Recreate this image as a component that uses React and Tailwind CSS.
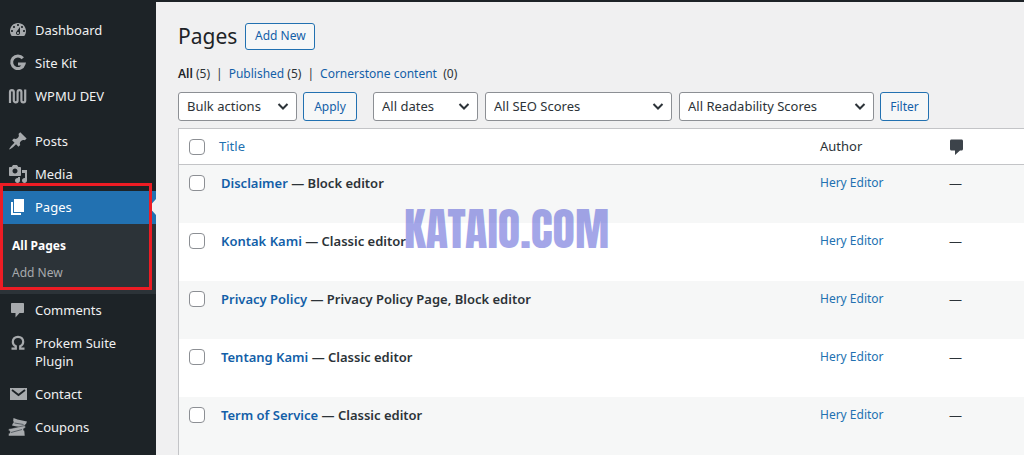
import React from 'react';

const UI_FONT = "font-['Noto_Sans','Open_Sans',sans-serif]";

// 20x20 grid icons used by the menu
const ICONS = {
  dashboard: (
    <path d="M3.76 16h12.48c1.1-1.37 1.76-3.11 1.76-5 0-4.42-3.58-8-8-8s-8 3.58-8 8c0 1.89.66 3.63 1.76 5zM10 4c.55 0 1 .45 1 1s-.45 1-1 1-1-.45-1-1 .45-1 1-1zM6 6c.55 0 1 .45 1 1s-.45 1-1 1-1-.45-1-1 .45-1 1-1zm8 0c.55 0 1 .45 1 1s-.45 1-1 1-1-.45-1-1 .45-1 1-1zm-5.37 5.55L12 7v6c0 1.1-.9 2-2 2s-2-.9-2-2c0-.57.24-1.08.63-1.45zM4 10c.55 0 1 .45 1 1s-.45 1-1 1-1-.45-1-1 .45-1 1-1zm12 0c.55 0 1 .45 1 1s-.45 1-1 1-1-.45-1-1 .45-1 1-1zm-5 3c0-.55-.45-1-1-1s-1 .45-1 1 .45 1 1 1 1-.45 1-1z" />
  ),
  siteKit: (
    <path d="M14.8 5.2A6.300 6.300 0 1 0 16 11H10" fill="none" stroke="currentColor" strokeWidth="3" />
  ),
  wpmu: (
    <path
      d="M2 17V6a1.900 1.900 0 0 1 3.800 0v8.500a1.900 1.900 0 0 0 3.800 0V6a1.900 1.900 0 0 1 3.800 0v8.500a1.900 1.900 0 0 0 3.800 0V3.500"
      fill="none"
      stroke="currentColor"
      strokeWidth="2.200"
    />
  ),
  posts: (
    <path d="M10.44 3.02l1.82-1.82 6.36 6.35-1.83 1.82c-1.05-.68-2.48-.57-3.41.36l-.75.75c-.92.93-1.04 2.35-.35 3.41l-1.83 1.82-2.41-2.41-2.8 2.79c-.42.42-3.38 2.71-3.8 2.29s1.86-3.39 2.28-3.81l2.79-2.79L4.1 9.36l1.83-1.82c1.05.69 2.48.57 3.4-.36l.75-.75c.93-.92 1.05-2.35.36-3.41z" />
  ),
  media: (
    <path d="M13 11V4c0-.55-.45-1-1-1h-1.67L9 1H5L3.67 3H2c-.55 0-1 .45-1 1v7c0 .55.45 1 1 1h10c.55 0 1-.45 1-1zM7 4.5c1.38 0 2.5 1.12 2.5 2.5S8.38 9.5 7 9.5 4.5 8.38 4.5 7 5.62 4.5 7 4.5zM14 6h5v10.5c0 1.38-1.12 2.5-2.5 2.5S14 17.88 14 16.5s1.12-2.5 2.5-2.5c.17 0 .34.02.5.05V9h-3V6zm-4 8.05V13h2v3.5c0 1.38-1.12 2.5-2.5 2.5S7 17.88 7 16.5 8.12 14 9.5 14c.17 0 .34.02.5.05z" />
  ),
  pages: <path d="M6 15V2h10v13H6zm-1 1h8v2H3V5h2v11z" />,
  comments: (
    <path d="M4 3h11c.6 0 1 .4 1 1v8c0 .6-.4 1-1 1h-3.500l-4 4.500V13H4c-.6 0-1-.4-1-1V4c0-.6.4-1 1-1z" />
  ),
  contact: (
    <>
      <path d="M2 4h17v12H2z" />
      <path d="M4 6l6.500 5L17 6" fill="none" stroke="#1d2327" strokeWidth="1.800" />
    </>
  ),
  coupons: (
    <>
      <path d="M5.500 1l4 1.500L19 4.500l-1 2.500a1.500 1.500 0 0 0-.8 2.200l-.7 2L4 8.500l.8-2A1.500 1.500 0 0 0 5.200 4z" />
      <path
        d="M.5 12L17 8.500l.6 2.500a1.500 1.500 0 0 0-1 3l.4 5H.5v-2.500a1.500 1.500 0 0 0 0-3z"
        stroke="#1d2327"
        strokeWidth="0.500"
      />
      <path d="M3 15.500L14 12.500M6.500 6l9 1.500" fill="none" stroke="#50575e" strokeWidth="0.900" />
    </>
  ),
  omega: (
    <path
      d="M3.500 15.700h4.300v-2.400C5.700 12.300 4.800 10.600 4.800 8.700 4.800 5.700 7 3.800 10 3.800s5.200 1.900 5.200 4.900c0 1.900-.9 3.600-3 4.600v2.400h4.300"
      fill="none"
      stroke="currentColor"
      strokeWidth="2.200"
    />
  ),
};

const MenuIcon = ({ name }) => (
  <svg className="w-5 h-5 shrink-0" viewBox="0 0 20 20" fill="currentColor" aria-hidden="true">
    {ICONS[name]}
  </svg>
);

const MenuItem = ({ icon, label, current }) => (
  <a
    href="#"
    className={
      current
        ? 'relative flex gap-[7px] pl-2 pr-4 pt-[7px] pb-2 leading-[18px] bg-[#2271b1] text-white'
        : 'flex gap-[7px] pl-2 pr-4 pt-[7px] pb-2 leading-[18px] text-[#f0f0f1] hover:text-[#72aee6]'
    }
  >
    <span className={current ? 'flex h-[18px] items-center text-white' : 'flex h-[18px] items-center text-[#a7aaad]'}>
      <MenuIcon name={icon} />
    </span>
    <span>{label}</span>
    {current && (
      <svg className="absolute right-0 top-2 w-[5px] h-4" viewBox="0 0 5 16" fill="#f0f0f1" aria-hidden="true">
        <path d="M5 0v16L1 11.500Q-1 8 1 4.500z" />
      </svg>
    )}
  </a>
);

const Sidebar = () => (
  <nav className="w-[156px] shrink-0 bg-[#1d2327] pt-3 text-[13px]">
    <MenuItem icon="dashboard" label="Dashboard" />
    <MenuItem icon="siteKit" label="Site Kit" />
    <MenuItem icon="wpmu" label="WPMU DEV" />
    <div className="h-3" />
    <MenuItem icon="posts" label="Posts" />
    <MenuItem icon="media" label="Media" />
    <div className="relative">
      <MenuItem icon="pages" label="Pages" current />
      <div className="flex flex-col bg-[#2c3338] pl-3 pt-2 pb-2 leading-[27px]">
        <a href="#" className="text-xs leading-[27px] font-bold text-white">All Pages</a>
        <a href="#" className="text-xs leading-[27px] text-[#a7aaad]">Add New</a>
      </div>
      {/* Highlight frame */}
      <div className="absolute -top-2 left-0 right-1 bottom-1 border-3 border-[#ed1c24] pointer-events-none" />
    </div>
    <MenuItem icon="comments" label="Comments" />
    <MenuItem icon="omega" label="Prokem Suite Plugin" />
    <MenuItem icon="contact" label="Contact" />
    <MenuItem icon="coupons" label="Coupons" />
  </nav>
);

const FilterSelect = ({ label, className }) => (
  <div className={`relative ${className}`}>
    <select
      aria-label={label}
      className="appearance-none w-full h-[29px] bg-white border border-[#8c8f94] rounded-[3px] pl-2 pr-6 text-[13px] text-[#2c3338]"
    >
      <option>{label}</option>
    </select>
    <svg
      className="absolute right-2 top-2 w-3 h-3 text-[#2c3338] pointer-events-none"
      fill="none"
      stroke="currentColor"
      viewBox="0 0 12 12"
    >
      <path strokeWidth={2} d="M1.500 4L6 8.500L10.500 4" />
    </svg>
  </div>
);

const OutlineButton = ({ children, className }) => (
  <button
    type="button"
    className={`border border-[#2271b1] rounded-[3px] bg-[#f6f7f7] text-xs text-[#135fa8] ${className}`}
  >
    {children}
  </button>
);

const Checkbox = ({ label }) => (
  <input
    type="checkbox"
    aria-label={label}
    className="appearance-none block w-4 h-4 bg-white border border-[#8c8f94] rounded-[4px] checked:bg-[#2271b1]"
  />
);

const pages = [
  { title: 'Disclaimer', state: 'Block editor' },
  { title: 'Kontak Kami', state: 'Classic editor' },
  { title: 'Privacy Policy', state: 'Privacy Policy Page, Block editor' },
  { title: 'Tentang Kami', state: 'Classic editor' },
  { title: 'Term of Service', state: 'Classic editor' },
];

const PagesTable = () => (
  <div className="relative mt-[7px]">
    <table className="w-full table-fixed border-separate border-spacing-0 border-t border-l border-[#c3c4c7] bg-white text-left">
      <thead>
        <tr className="h-9">
          <th className="w-10 pl-[10px] border-b border-[#c3c4c7]"><Checkbox label="Select all" /></th>
          <th className="font-normal border-b border-[#c3c4c7]">
            <a href="#" className="text-[#2271b1]">Title</a>
          </th>
          <th className="w-[129px] px-2 font-normal text-[#2c3338] border-b border-[#c3c4c7]">Author</th>
          <th className="w-[83px] px-2 border-b border-[#c3c4c7]">
            <svg className="w-5 h-5 text-[#3c434a]" viewBox="0 0 20 20" fill="currentColor" role="img" aria-label="Comments">
              <path d="M2.500 2.500h10c.9 0 1.500.6 1.500 1.500v8c0 .9-.6 1.500-1.500 1.500h-1.500L6 18V13.500H2.500C1.600 13.500 1 12.900 1 12V4c0-.9.6-1.500 1.500-1.500z" />
            </svg>
          </th>
        </tr>
      </thead>
      <tbody>
        {pages.map((page) => (
          <tr key={page.title} className="h-[58px] align-top odd:bg-[#f6f7f7]">
            <td className="pl-[10px] pt-[10px]"><Checkbox label={`Select ${page.title}`} /></td>
            <td className="pl-[2px] pt-2 font-semibold leading-5 text-[#2c3338]">
              <a href="#" className="text-[#135fa8]">{page.title}</a> — {page.state}
            </td>
            <td className="px-2 pt-2 text-xs leading-5">
              <a href="#" className="text-[#2271b1]">Hery Editor</a>
            </td>
            <td className="px-2 pt-2 leading-5">—</td>
          </tr>
        ))}
      </tbody>
    </table>
    {/* Site watermark over the list */}
    <div className="absolute left-[226px] top-[77px] h-12 flex items-center whitespace-nowrap text-[46px] leading-none text-[#4b50d2] opacity-50 pointer-events-none font-['Anton','Bebas_Neue',sans-serif]">
      KATAIO.COM
    </div>
  </div>
);

const App = () => (
  <div className={`min-h-screen flex flex-col bg-[#f0f0f1] text-[13px] text-[#2c3338] ${UI_FONT}`}>
    <div className="h-[2px] bg-[#1d2327]" />
    <div className="flex flex-1">
      <Sidebar />
      <main className="flex-1 min-w-0 pl-[22px] pt-5">
        <div className="flex items-center gap-2">
          <h1 className="text-[21px] leading-7 text-[#1d2327]">Pages</h1>
          <OutlineButton className="h-[27px] w-[70px]">Add New</OutlineButton>
        </div>

        <ul className="mt-[14px] flex gap-[6px] text-xs leading-5">
          <li><a href="#" className="font-semibold text-[#1d2327]">All</a> (5)</li>
          <li>|</li>
          <li><a href="#" className="text-[#135fa8]">Published</a> (5)</li>
          <li>|</li>
          <li><a href="#" className="text-[#135fa8]">Cornerstone content</a>&nbsp; (0)</li>
        </ul>

        <div className="mt-2 flex">
          <FilterSelect label="Bulk actions" className="w-[119px] mr-[6px]" />
          <OutlineButton className="w-[54px] mr-4">Apply</OutlineButton>
          <FilterSelect label="All dates" className="w-[105px] mr-[7px]" />
          <FilterSelect label="All SEO Scores" className="w-[187px] mr-[7px]" />
          <FilterSelect label="All Readability Scores" className="w-[195px] mr-[6px]" />
          <OutlineButton className="w-[49px]">Filter</OutlineButton>
        </div>

        <PagesTable />
      </main>
    </div>
  </div>
);

export default App;
